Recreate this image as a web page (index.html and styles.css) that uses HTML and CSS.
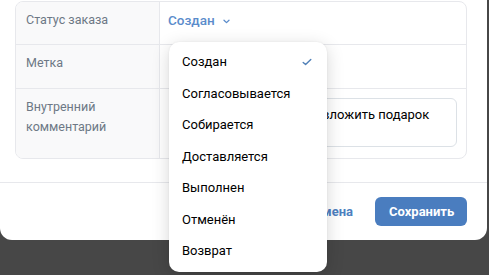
FILE: index.html
```html
<!DOCTYPE html>
<html lang="ru">
<head>
<meta charset="utf-8">
<link rel="stylesheet" href="styles.css">
</head>
<body>
<div class="screen">
  <div class="modal">
    <div class="form">
      <div class="table">
        <div class="row row-first">
          <div class="label">Статус заказа</div>
          <div class="value">
            <span class="select">Создан
              <svg class="chev" width="7" height="5" viewBox="0 0 7 5"><path d="M1 1.2 L3.5 3.6 L6 1.2" fill="none" stroke="currentColor" stroke-width="1.3" stroke-linecap="round" stroke-linejoin="round"/></svg>
            </span>
          </div>
        </div>
        <div class="row row-second">
          <div class="label">Метка</div>
          <div class="value"></div>
        </div>
        <div class="row row-third">
          <div class="label">Внутренний<br>комментарий</div>
          <div class="value value-area">
            <div class="textarea">Покупатель попросил вложить подарок</div>
          </div>
        </div>
      </div>
    </div>
    <div class="footer">
      <button class="btn btn-tertiary">Отмена</button>
      <button class="btn btn-primary">Сохранить</button>
    </div>
  </div>

  <div class="dropdown">
    <div class="item item-selected">Создан
      <svg class="check" width="10" height="8" viewBox="0 0 10 8"><path d="M1.2 4.4 L3.6 6.6 L8.8 1.4" fill="none" stroke="currentColor" stroke-width="1.4" stroke-linecap="round" stroke-linejoin="round"/></svg>
    </div>
    <div class="item">Согласовывается</div>
    <div class="item">Собирается</div>
    <div class="item">Доставляется</div>
    <div class="item">Выполнен</div>
    <div class="item">Отменён</div>
    <div class="item">Возврат</div>
  </div>
</div>
</body>
</html>
```
FILE: styles.css
```css
* { box-sizing: border-box; }
html, body {
  margin: 0;
  padding: 0;
}
body {
  background: #474747;
  font-family: Roboto, "Noto Sans", "Liberation Sans", sans-serif;
  color: #000;
  width: 489px;
  height: 275px;
  overflow: hidden;
}
.screen {
  position: relative;
  width: 489px;
  height: 275px;
}
.modal {
  width: 487px;
  height: 240px;
  background: #fff;
  border-radius: 0 0 12px 12px;
  display: flex;
  flex-direction: column;
}
.form {
  padding: 1px 21px 0 15px;
  height: 182px;
}
.table {
  width: 452px;
  border: 1px solid #e7e8ec;
  border-radius: 8px;
  overflow: hidden;
}
.row {
  display: grid;
  grid-template-columns: 144px 1fr;
}
.row-first { height: 43px; border-bottom: 1px solid #e7e8ec; }
.row-second { height: 44px; border-bottom: 1px solid #e7e8ec; }
.row-third { height: 69px; }
.label {
  background: #f9f9fa;
  border-right: 1px solid #e7e8ec;
  padding: 8px 10px 0 10px;
  font-size: 12.5px;
  line-height: 20px;
  color: #6d7885;
}
.value {
  padding: 8px 9px 0 8px;
  font-size: 13.5px;
  line-height: 20px;
}
.value-area { padding: 9px 9px 0 9px; }
.select {
  color: #5b8ccb;
  font-weight: 500;
  display: inline-flex;
  align-items: center;
  gap: 8px;
}
.chev { margin-top: 2px; }
.textarea {
  height: 49px;
  border: 1px solid #dce1e6;
  border-radius: 6px;
  padding: 7px 10px 7px 15px;
  font-size: 13px;
  line-height: 18px;
  color: #000;
  white-space: nowrap;
  overflow: hidden;
}
.footer {
  border-top: 1px solid #e7e8ec;
  flex: 1;
  display: flex;
  justify-content: flex-end;
  align-items: flex-start;
  padding: 14px 20px 0 0;
  gap: 6px;
}
.btn {
  font-family: inherit;
  font-size: 13px;
  font-weight: 700;
  height: 29px;
  border: none;
  border-radius: 6px;
  padding: 0 14px;
  cursor: pointer;
}
.btn-tertiary {
  background: transparent;
  color: #4d7fc0;
  padding: 0 16px;
}
.btn-primary {
  background: #4a7dbf;
  color: #fff;
  width: 92px;
}
.dropdown {
  position: absolute;
  left: 169px;
  top: 42px;
  width: 158px;
  height: 230px;
  background: #fff;
  border-radius: 10px;
  box-shadow: 0 4px 18px rgba(0, 0, 0, 0.16), 0 0 2px rgba(0, 0, 0, 0.08);
  padding: 4px 0 6px;
}
.item {
  height: 31.5px;
  display: flex;
  align-items: center;
  justify-content: space-between;
  padding: 0 15px 0 13px;
  font-size: 13px;
  color: #000;
}
.check { color: #5181b8; }
```
